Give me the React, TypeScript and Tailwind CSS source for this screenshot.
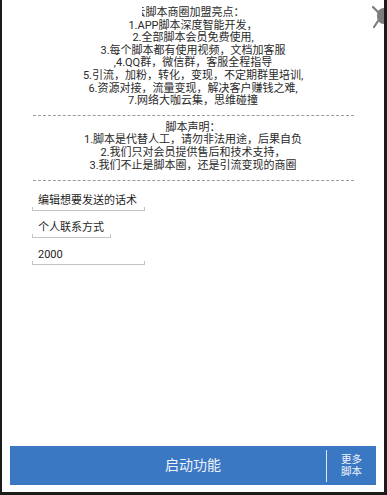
const font = { fontFamily: "Roboto, 'Noto Sans CJK SC', 'Noto Sans', sans-serif" };

const intro = [
  "1.APP脚本深度智能开发，",
  "2.全部脚本会员免费使用,",
  "3.每个脚本都有使用视频，文档加客服",
  ",4.QQ群，微信群，客服全程指导",
  "5.引流，加粉，转化，变现，不定期群里培训,",
  "6.资源对接，流量变现，解决客户赚钱之难,",
  "7.网络大咖云集，思维碰撞",
];

const notice = [
  "1.脚本是代替人工，请勿非法用途，后果自负",
  "2.我们只对会员提供售后和技术支持，",
  "3.我们不止是脚本圈，还是引流变现的商圈",
];

function Field({ text, width }: { text: string; width: string }) {
  return (
    <div className={`relative ${width} h-[26px] flex items-end pb-[4px] pl-[6px] text-[11px] leading-[13px] whitespace-nowrap text-[#1f1f1f]`}>
      {text}
      <div className="absolute left-0 right-0 bottom-0 h-[1px] bg-[#c4c4c4]" />
      <div className="absolute left-0 bottom-0 w-[1px] h-[4px] bg-[#c4c4c4]" />
      <div className="absolute right-0 bottom-0 w-[1px] h-[4px] bg-[#c4c4c4]" />
    </div>
  );
}

export default function App() {
  return (
    <div className="w-[387px] h-[495px] bg-[#1b1b1b] pl-[2px] pr-[3px] pb-[3px]" style={font}>
      <div className="relative w-full h-full bg-white flex flex-col overflow-hidden">
        <svg className="absolute right-0 top-[4px]" width="12" height="25" viewBox="0 0 12 25">
          <path d="M12 4 C7 4 5 8 5 12 C5 17 8 20 12 20 Z" fill="#7d7d7d" />
          <path d="M6 8 L1 3" stroke="#7d7d7d" strokeWidth="2.2" strokeLinecap="round" />
          <path d="M6 17 L2 23" stroke="#7d7d7d" strokeWidth="2.2" strokeLinecap="round" />
        </svg>

        <div className="pt-[7px] text-center text-[11px] leading-[12.6px] text-[#2a2a2a]">
          <div>
            <span className="inline-flex justify-end w-[4px] overflow-hidden align-bottom">
              <span>云</span>
            </span>
            脚本商圈加盟亮点：
          </div>
          {intro.map((l) => (
            <div key={l}>{l}</div>
          ))}
        </div>

        <div className="mx-auto mt-[7px] w-[321px] border-t border-dashed border-[#9a9a9a]" />

        <div className="mt-[6px] text-center text-[11px] leading-[12.6px] text-[#2a2a2a]">
          <div>脚本声明：</div>
          {notice.map((l) => (
            <div key={l}>{l}</div>
          ))}
        </div>

        <div className="mx-auto mt-[8px] w-[321px] border-t border-dashed border-[#9a9a9a]" />

        <div className="flex flex-col gap-[1px] pl-[30px] mt-[4px]">
          <Field text="编辑想要发送的话术" width="w-[113px]" />
          <Field text="个人联系方式" width="w-[79px]" />
          <Field text="2000" width="w-[113px]" />
        </div>

        <div className="flex-1" />

        <div className="relative mx-[8px] mb-[7px] h-[39px] bg-[#3b78c4] flex items-center justify-center">
          <span className="text-[14px] text-[#eef3fa]">启动功能</span>
          <div className="absolute right-0 top-0 bottom-0 w-[50px] flex items-center">
            <div className="w-[1px] h-[32px] bg-[#dfe8f5]" />
            <div className="flex-1 flex flex-col items-center text-[10.5px] leading-[12px] text-[#eef3fa]">
              <span>更多</span>
              <span>脚本</span>
            </div>
          </div>
        </div>
      </div>
    </div>
  );
}
